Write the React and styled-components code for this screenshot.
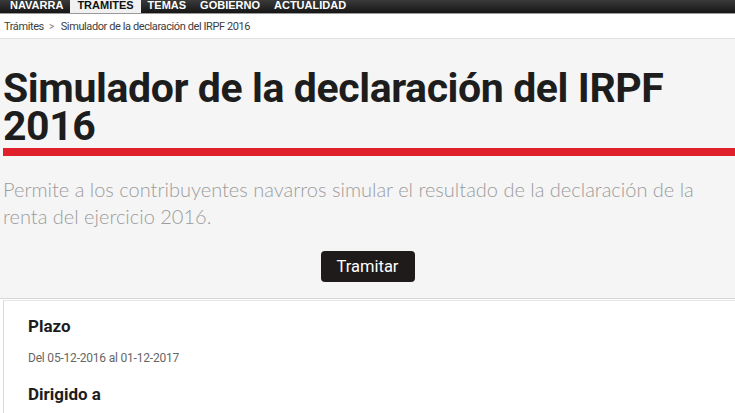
import React from 'react';
import styled, { createGlobalStyle } from 'styled-components';

const GlobalStyle = createGlobalStyle`
  html, body {
    margin: 0;
    padding: 0;
    background: #fff;
    overflow: hidden;
  }
  body {
    font-family: Roboto, "Liberation Sans", Arial, sans-serif;
  }
`;

const Page = styled.div`
  width: 735px;
  height: 413px;
  overflow: hidden;
`;

const TopNav = styled.nav`
  display: flex;
  height: 13px;
  padding-left: 3px;
  background: linear-gradient(#3a3a3a, #161616);
  border-bottom: 1px solid #9a9a9a;
  overflow: hidden;
`;

const NavItem = styled.a`
  display: block;
  padding: 0 7px;
  height: 13px;
  font-family: "Liberation Sans", Arial, sans-serif;
  font-weight: bold;
  font-size: 11px;
  line-height: 11px;
  color: ${({ active }) => (active ? '#111' : '#fff')};
  background: ${({ active }) => (active ? '#f1f1f1' : 'transparent')};
  text-decoration: none;
`;

const Breadcrumb = styled.div`
  display: flex;
  align-items: center;
  gap: 4px;
  height: 24px;
  padding-left: 4px;
  font-size: 11px;
  letter-spacing: -0.4px;
  color: #3d3d3d;
  border-bottom: 1px solid #e2e2e2;
  background: #fff;
`;

const Sep = styled.span`
  color: #777;
  font-size: 10px;
  margin: 1px 3px 0 1px;
`;

const Hero = styled.section`
  background: #f5f5f5;
  padding: 30px 0 16px 3px;
  border-bottom: 1px solid #d6d6d6;
`;

const Title = styled.h1`
  margin: 0 -3px 0 0;
  font-family: Roboto, "Liberation Sans", sans-serif;
  font-weight: 700;
  font-size: 41px;
  line-height: 38px;
  color: #1d1d1d;
  letter-spacing: -0.4px;
  padding-bottom: 3px;
  border-bottom: 8px solid #e0202b;
`;

const Lead = styled.p`
  margin: 20px 30px 0 0;
  font-family: Lato, Roboto, "Liberation Sans", sans-serif;
  font-weight: 300;
  font-size: 20px;
  line-height: 27px;
  color: #9c9c9c;
`;

const Actions = styled.div`
  display: flex;
  justify-content: center;
  margin-top: 21px;
  padding-right: 3px;
`;

const Button = styled.button`
  width: 94px;
  height: 31px;
  border: none;
  border-radius: 4px;
  background: #1f1b1b;
  color: #fff;
  font-family: Roboto, "Liberation Sans", sans-serif;
  font-size: 16.5px;
  cursor: pointer;
`;

const Card = styled.div`
  margin: 1px 0 0 3px;
  padding: 13px 24px;
  background: #fff;
  border-left: 1px solid #dadada;
  border-top: 1px solid #e6e6e6;
`;

const Heading = styled.h3`
  margin: 0;
  font-weight: 700;
  font-size: 17px;
  line-height: 24px;
  color: #1d1d1d;
`;

const Detail = styled.p`
  margin: 13px 0 17px;
  font-size: 12px;
  letter-spacing: -0.2px;
  color: #666;
`;

const items = ['NAVARRA', 'TRAMITES', 'TEMAS', 'GOBIERNO', 'ACTUALIDAD'];

export default function App() {
  return (
    <Page>
      <GlobalStyle />
      <TopNav>
        {items.map((item) => (
          <NavItem key={item} active={item === 'TRAMITES'}>
            {item}
          </NavItem>
        ))}
      </TopNav>
      <Breadcrumb>
        <span>Trámites</span>
        <Sep>&gt;</Sep>
        <span>Simulador de la declaración del IRPF 2016</span>
      </Breadcrumb>
      <Hero>
        <Title>Simulador de la declaración del IRPF 2016</Title>
        <Lead>
          Permite a los contribuyentes navarros simular el resultado de la declaración de la renta
          del ejercicio 2016.
        </Lead>
        <Actions>
          <Button>Tramitar</Button>
        </Actions>
      </Hero>
      <Card>
        <Heading>Plazo</Heading>
        <Detail>Del 05-12-2016 al 01-12-2017</Detail>
        <Heading>Dirigido a</Heading>
      </Card>
    </Page>
  );
}
